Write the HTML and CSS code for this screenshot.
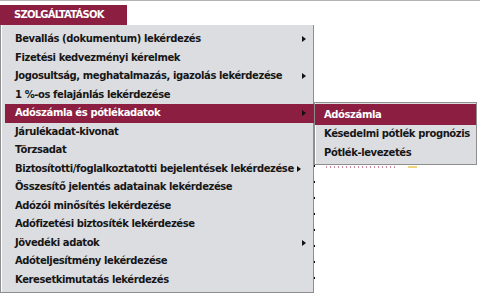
FILE: index.html
```html
<!DOCTYPE html>
<html lang="hu">
<head>
<meta charset="utf-8">
<link rel="stylesheet" href="styles.css">
</head>
<body>
<div class="topline"></div>
<div class="page">
  <div class="tabbar"><div class="tab">SZOLGÁLTATÁSOK</div></div>
  <div class="backdrop">
    <div class="dots"></div>
    <div class="redline"></div>
    <div class="peek"></div>
    <div class="peek-icon"></div>
  </div>
  <ul class="menu">
    <li class="item sub">Bevallás (dokumentum) lekérdezés<span class="arr"></span></li>
    <li class="item">Fizetési kedvezményi kérelmek</li>
    <li class="item sub">Jogosultság, meghatalmazás, igazolás lekérdezése<span class="arr"></span></li>
    <li class="item">1 %-os felajánlás lekérdezése</li>
    <li class="item sub active">Adószámla és pótlékadatok<span class="arr"></span>
      <ul class="submenu">
        <li class="item active">Adószámla</li>
        <li class="item">Késedelmi pótlék prognózis</li>
        <li class="item">Pótlék-levezetés</li>
      </ul>
    </li>
    <li class="item">Járulékadat-kivonat</li>
    <li class="item">Törzsadat</li>
    <li class="item sub tight">Biztosítotti/foglalkoztatotti bejelentések lekérdezése<span class="arr"></span></li>
    <li class="item">Összesítő jelentés adatainak lekérdezése</li>
    <li class="item">Adózói minősítés lekérdezése</li>
    <li class="item">Adófizetési biztosíték lekérdezése</li>
    <li class="item sub">Jövedéki adatok<span class="arr"></span></li>
    <li class="item">Adóteljesítmény lekérdezése</li>
    <li class="item">Keresetkimutatás lekérdezés</li>
  </ul>
</div>
</body>
</html>
```
FILE: styles.css
```css
* { box-sizing: border-box; }
html, body { margin: 0; padding: 0; background: #fff; }
body {
  width: 480px;
  height: 293px;
  overflow: hidden;
  font-family: "DejaVu Sans", Verdana, sans-serif;
  font-weight: bold;
  font-size: 10px;
  letter-spacing: -0.4px;
  color: #161616;
}
.topline { height: 1px; background: #b4b4b4; }
.page { position: relative; }
.tabbar { padding-top: 4px; }
.tab {
  width: 127px;
  height: 20px;
  background: #8b1e41;
  color: #fff;
  font-size: 10px;
  padding-left: 14px;
  line-height: 20px;
  letter-spacing: -0.75px;
}
.backdrop { position: absolute; left: 0; top: 0; width: 480px; height: 293px; z-index: 0; }
.dots {
  position: absolute; left: 314px; top: 164px; width: 1px; height: 130px;
  background: repeating-linear-gradient(to bottom, #000 0 2px, transparent 2px 16px);
}
.redline { position: absolute; left: 295px; top: 286px; width: 1px; height: 8px; background: #a03050; }
.peek {
  position: absolute; left: 326px; top: 165px; width: 72px; height: 2px;
  background: repeating-linear-gradient(to right, #c48a9c 0 1px, transparent 1px 4px);
}
.peek-icon { position: absolute; left: 408px; top: 165px; width: 9px; height: 2px; background: #f2d27a; }
.menu {
  position: relative;
  z-index: 1;
  list-style: none;
  margin: 0;
  width: 314px;
  padding: 5px 0 3px 4px;
  background: #dcdde1;
  border: 1px solid #8e8e8e;
  border-top: 0;
  box-shadow: inset 1px 0 0 #fff;
}
.item {
  position: relative;
  height: 18.5px;
  line-height: 18.5px;
  padding-left: 10px;
  white-space: nowrap;
}
.item.active { background: #8b1e41; color: #fff; margin-right: -1px; }
.arr {
  position: absolute;
  left: 297px;
  top: 6px;
  width: 0; height: 0;
  border-left: 4px solid #111;
  border-top: 3.5px solid transparent;
  border-bottom: 3.5px solid transparent;
}
.tight .arr { left: 292px; }
.submenu {
  position: absolute;
  left: 309px;
  top: -2px;
  width: 163px;
  list-style: none;
  margin: 0;
  padding: 1px 0 2px 0;
  background: #dcdde1;
  border: 1px solid #8e8e8e;
  color: #161616;
  box-shadow: inset 1px 0 0 #fff;
}
.submenu .item { padding-left: 9px; }
.submenu .item.active { height: 21px; line-height: 21px; margin-right: 0; color: #fff; }
```
